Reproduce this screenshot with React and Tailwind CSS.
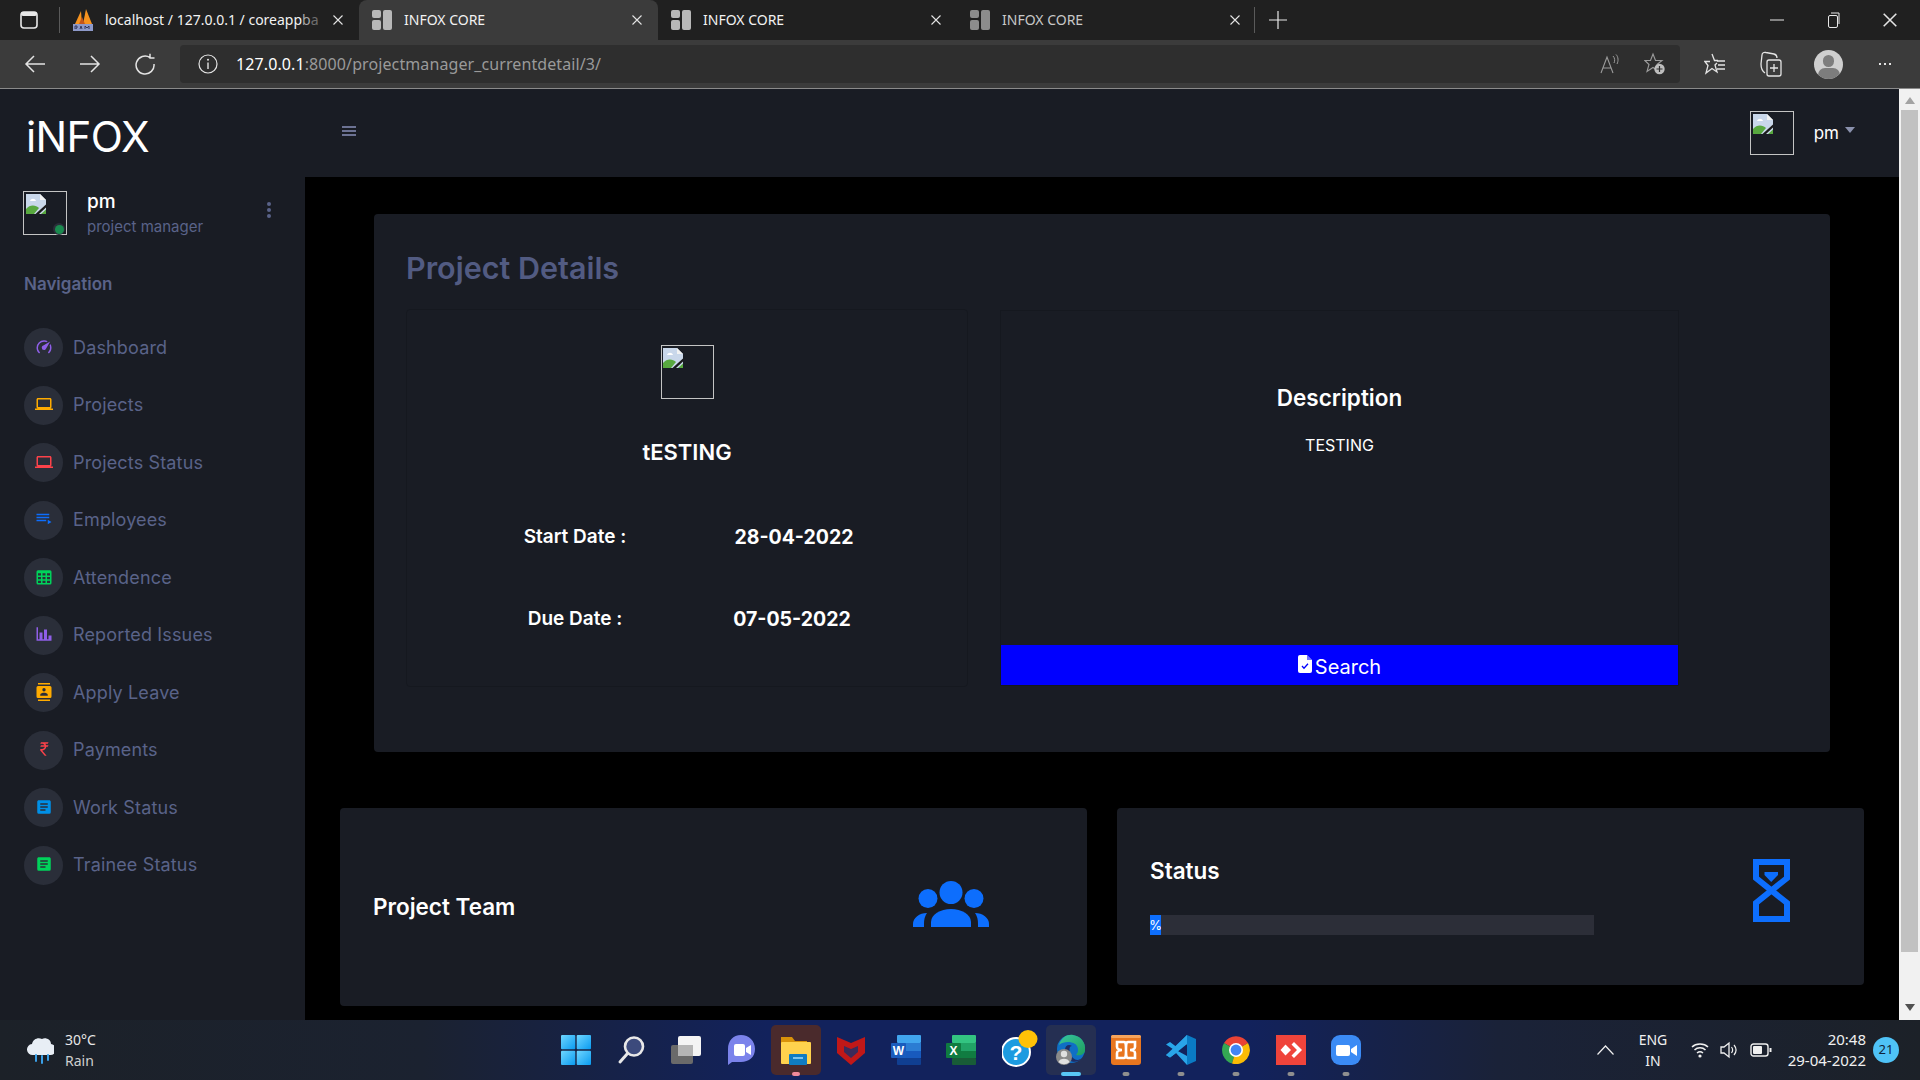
import React from "react";

const UI = "font-['Inter','Noto_Sans',sans-serif]";
const CHROME = "font-['Noto_Sans','Open_Sans',sans-serif]";

const P = {
  speed: "M12,16A3,3 0 0,1 9,13C9,11.88 9.61,10.9 10.5,10.39L20.21,4.77L14.68,14.35C14.18,15.33 13.17,16 12,16M12,3C13.81,3 15.5,3.5 16.97,4.32L14.87,5.53C14,5.19 13,5 12,5A8,8 0 0,0 4,13C4,15.21 4.89,17.21 6.34,18.65H6.35C6.74,19.04 6.74,19.67 6.35,20.06C5.96,20.45 5.32,20.45 4.93,20.07V20.07C3.12,18.26 2,15.76 2,13A10,10 0 0,1 12,3M22,13C22,15.76 20.88,18.26 19.07,20.07V20.07C18.68,20.45 18.05,20.45 17.66,20.06C17.27,19.67 17.27,19.04 17.66,18.65V18.65C19.11,17.2 20,15.21 20,13C20,12 19.81,11 19.46,10.1L20.67,8C21.5,9.5 22,11.18 22,13Z",
  laptop: "M4,6H20V16H4M20,18A2,2 0 0,0 22,16V6C22,4.89 21.1,4 20,4H4C2.89,4 2,4.89 2,6V16A2,2 0 0,0 4,18H0V20H24V18H20Z",
  list: "M19,9H2V11H19V9M19,5H2V7H19V5M2,15H15V13H2V15M17,13V19L22,16L17,13Z",
  table: "M4,3H20A2,2 0 0,1 22,5V20A2,2 0 0,1 20,22H4A2,2 0 0,1 2,20V5A2,2 0 0,1 4,3M4,7V10H8V7H4M10,7V10H14V7H10M20,10V7H16V10H20M4,12V15H8V12H4M4,20H8V17H4V20M10,12V15H14V12H10M10,20H14V17H10V20M20,20V17H16V20H20M20,12H16V15H20V12Z",
  chart: "M22,21H2V3H4V19H6V10H10V19H12V6H16V19H18V14H22V21Z",
  contacts: "M20,0H4V2H20V0M4,24H20V22H4V24M20,4H4A2,2 0 0,0 2,6V18A2,2 0 0,0 4,20H20A2,2 0 0,0 22,18V6A2,2 0 0,0 20,4M12,6.75A2.25,2.25 0 0,1 14.25,9A2.25,2.25 0 0,1 12,11.25A2.25,2.25 0 0,1 9.75,9A2.25,2.25 0 0,1 12,6.75M17,17H7V15.5C7,13.83 10.33,13 12,13C13.67,13 17,13.83 17,15.5V17Z",
  rupee: "M8,3H18L17,5H13.74C14.22,5.58 14.58,6.26 14.79,7H18L17,9H15C14.75,11.57 12.74,13.63 10.2,13.96V14H9.5L15.5,21H13L7,14V12H9.5V12C11.26,12 12.72,10.7 12.96,9H7L8,7H12.66C12.1,5.82 10.9,5 9.5,5H7L8,3Z",
  doc: "M14,17H7V15H14M17,13H7V11H17M17,9H7V7H17M19,3H5C3.89,3 3,3.89 3,5V19A2,2 0 0,0 5,21H19A2,2 0 0,0 21,19V5C21,3.89 20.1,3 19,3Z",
};

const NAV = [
  ["Dashboard", P.speed, "#8f5fe8"],
  ["Projects", P.laptop, "#ffab00"],
  ["Projects Status", P.laptop, "#fc424a"],
  ["Employees", P.list, "#0d6efd"],
  ["Attendence", P.table, "#00d25b"],
  ["Reported Issues", P.chart, "#8f5fe8"],
  ["Apply Leave", P.contacts, "#ffab00"],
  ["Payments", P.rupee, "#fc424a"],
  ["Work Status", P.doc, "#0090e7"],
  ["Trainee Status", P.doc, "#00d25b"],
];

function Broken({ size = 20 }) {
  return (
    <svg width={size} height={size} viewBox="0 0 20 20" className="block">
      <path d="M0 0H14L20 6V20H0Z" fill="#c9d7ea" />
      <path d="M14 0L20 6H14Z" fill="#f2f2f2" />
      <path d="M4 7c1-3 5-3 6 0z" fill="#fff" />
      <path d="M0 20V15C4 10 10 11 13 14L8 20Z" fill="#58a83f" />
      <path d="M9.5 20L20 10.5V13.5L13 20Z" fill="#1a1a1a" />
      <path d="M15 20L20 15.5V20Z" fill="#58a83f" />
    </svg>
  );
}

function ImgBox({ className, children, offset = "pl-[2px] pt-[2px]" }) {
  return (
    <div className={`relative box-border border border-[#c4c4c4] ${offset} ${className}`}>
      <Broken />
      {children}
    </div>
  );
}

function TabIcon({ dim }) {
  return (
    <svg width="20" height="20" viewBox="0 0 20 20" className="shrink-0">
      <g fill={dim ? "#8c8c8c" : "#b8b8b8"}>
        <rect x="0" y="0" width="9" height="8" rx="2" />
        <rect x="0" y="10" width="9" height="10" rx="2" />
        <rect x="11" y="0" width="9" height="20" rx="2" />
      </g>
    </svg>
  );
}

function Pma() {
  return (
    <svg width="20" height="22" viewBox="0 0 20 22" className="shrink-0">
      <path d="M2 15L8 2L9 15Z" fill="#f7931e" />
      <path d="M10 15L13 0L19 15Z" fill="#f7931e" />
      <path d="M6 15L9 8L12 15Z" fill="#c5561a" />
      <rect x="0" y="15" width="20" height="7" fill="#8d99c9" />
      <path d="M2 20V17H4V19H3V20M7 20L8 17L9 20M12 20V17L14 19L16 17V20" stroke="#2a2f55" strokeWidth="0.9" fill="none" />
    </svg>
  );
}

function CloseX({ size = 10, color = "#e4e4e4" }) {
  return (
    <svg width={size} height={size} viewBox="0 0 10 10" className="shrink-0">
      <path d="M0.5 0.5L9.5 9.5M9.5 0.5L0.5 9.5" stroke={color} strokeWidth="1.1" />
    </svg>
  );
}

function Tab({ active, title, icon, dim }) {
  return (
    <div className={`relative flex h-[40px] w-[299px] shrink-0 items-center pl-[13px] ${active ? "rounded-t-[8px] bg-[#3b3b3b]" : ""}`}>
      <div className="flex w-[20px] justify-center">{icon}</div>
      <div className={`ml-[12px] w-[218px] whitespace-nowrap text-[14px] leading-[20px] ${dim ? "text-[#c8c8c8]" : "text-[#f2f2f2]"}`}>
        {title}
      </div>
      <div className="ml-[10px]"><CloseX /></div>
    </div>
  );
}

function TabStrip() {
  return (
    <div className={`flex h-[40px] shrink-0 items-center bg-[#202020] ${CHROME}`}>
      <div className="flex w-[59px] shrink-0 justify-center pr-[2px]">
        <svg width="18" height="18" viewBox="0 0 18 18">
          <rect x="1" y="1" width="16" height="16" rx="3" fill="none" stroke="#e8e8e8" strokeWidth="1.6" />
          <rect x="1" y="1" width="16" height="4" rx="2" fill="#e8e8e8" />
        </svg>
      </div>
      <div className="h-[26px] w-px shrink-0 bg-[#5a5a5a]" />
      <Tab icon={<Pma />} title={<span>localhost / 127.0.0.1 / coreapp<span className="text-[#a8a8a8]">b</span><span className="text-[#6e6e6e]">a</span></span>} />
      <Tab active icon={<TabIcon />} title="INFOX CORE" />
      <Tab icon={<TabIcon />} title="INFOX CORE" />
      <Tab icon={<TabIcon dim />} title="INFOX CORE" dim />
      <div className="-ml-[2px] h-[26px] w-px shrink-0 bg-[#5a5a5a]" />
      <div className="ml-[14px]">
        <svg width="18" height="18" viewBox="0 0 18 18"><path d="M9 0V18M0 9H18" stroke="#e8e8e8" strokeWidth="1.2" /></svg>
      </div>
      <div className="ml-auto flex items-center">
        <div className="flex w-[57px] justify-center">
          <svg width="14" height="14" viewBox="0 0 14 14"><path d="M0 7H14" stroke="#e8e8e8" /></svg>
        </div>
        <div className="flex w-[57px] justify-center">
          <svg width="14" height="16" viewBox="0 0 14 16"><rect x="1.5" y="3.5" width="9" height="12" rx="1.5" fill="none" stroke="#e8e8e8" /><path d="M4 1H12V12" fill="none" stroke="#e8e8e8" /></svg>
        </div>
        <div className="flex w-[58px] justify-center pr-[2px]"><CloseX size={14} /></div>
      </div>
    </div>
  );
}

function Toolbar() {
  return (
    <div className={`flex h-[49px] shrink-0 items-start border-b border-[#8a8a8a] bg-[#3b3b3b] ${CHROME}`}>
      <div className="flex h-[48px] w-[180px] shrink-0 items-center pl-[24px]">
        <svg width="22" height="20" viewBox="0 0 22 20"><path d="M21 10H2M10 2L2 10L10 18" fill="none" stroke="#e4e4e4" strokeWidth="1.5" /></svg>
        <svg width="22" height="20" viewBox="0 0 22 20" className="ml-[33px]"><path d="M1 10H20M12 2L20 10L12 18" fill="none" stroke="#e4e4e4" strokeWidth="1.5" /></svg>
        <svg width="22" height="22" viewBox="0 0 22 22" className="ml-[33px]"><path d="M16 4.5A9 9 0 1 0 20 11M16 0.8V5H20.5" fill="none" stroke="#e4e4e4" strokeWidth="1.5" /></svg>
      </div>
      <div className="mt-[5px] flex h-[38px] w-[1500px] shrink-0 items-center rounded-[4px] bg-[#2e2e2e] pl-[18px]">
        <svg width="20" height="20" viewBox="0 0 20 20" className="shrink-0"><circle cx="10" cy="10" r="9" fill="none" stroke="#e4e4e4" strokeWidth="1.2" /><path d="M10 8.5V15" stroke="#e4e4e4" strokeWidth="1.4" /><circle cx="10" cy="5.8" r="1" fill="#e4e4e4" /></svg>
        <div className="ml-[18px] whitespace-nowrap text-[16px] leading-[22px] tracking-[0.1px] text-[#9a9a9a]">
          <span className="text-white">127.0.0.1</span>:8000/projectmanager_currentdetail/3/
        </div>
        <svg width="22" height="22" viewBox="0 0 22 22" className="ml-auto shrink-0"><path d="M2 20L8 4L14 20M4 15H12" fill="none" stroke="#9c9c9c" strokeWidth="1.1" /><path d="M14 3C16 5 16 8 15 10M17 1.5C19.5 4 19.5 8 18 11" fill="none" stroke="#9c9c9c" /></svg>
        <svg width="22" height="24" viewBox="0 0 22 24" className="ml-[23px] mr-[14px] shrink-0"><path d="M9 2L11.5 8.5H18L13 12.5L14 19L9 15.5L3 19.5L5 12.5L0.8 8.5H6.5Z" fill="none" stroke="#9c9c9c" strokeWidth="1.1" /><circle cx="15.5" cy="17" r="5.2" fill="#bdbdbd" /><path d="M15.5 14V20M12.5 17H18.5" stroke="#2e2e2e" strokeWidth="1.2" /></svg>
      </div>
      <div className="flex h-[48px] flex-1 items-center">
        <svg width="22" height="24" viewBox="0 0 22 24" className="ml-[24px]"><path d="M8 2L10.5 8.5H14M13 11L11 13L13 20L8 16.5L2 21L4 13.5L0.8 9.5H6" fill="none" stroke="#e4e4e4" strokeWidth="1.3" /><path d="M13 9H21M14 13H21M13 17H21" stroke="#e4e4e4" strokeWidth="1.3" /></svg>
        <svg width="24" height="26" viewBox="0 0 24 26" className="ml-[33px]"><path d="M6 22C3 20 2 17 2 13L3 4C3 2 5 1 7 1.5L15 3C17 3.5 18 5 18 7" fill="none" stroke="#e4e4e4" strokeWidth="1.3" /><rect x="8" y="9" width="14" height="16" rx="2" fill="#3b3b3b" stroke="#e4e4e4" strokeWidth="1.3" /><path d="M15 13V21M11 17H19" stroke="#e4e4e4" strokeWidth="1.3" /></svg>
        <div className="relative ml-[31px] h-[29px] w-[29px] overflow-hidden rounded-full bg-[#cfcfcf]">
          <div className="mx-auto mt-[5px] h-[12px] w-[11px] rounded-full bg-[#7d7d7d]" />
          <div className="mx-auto mt-[1px] h-[14px] w-[22px] rounded-full bg-[#7d7d7d]" />
        </div>
        <div className="ml-[36px] flex gap-[3px]">
          <div className="h-[2px] w-[2px] bg-[#e4e4e4]" /><div className="h-[2px] w-[2px] bg-[#e4e4e4]" /><div className="h-[2px] w-[2px] bg-[#e4e4e4]" />
        </div>
      </div>
    </div>
  );
}

function Sidebar() {
  return (
    <div className={`flex w-[305px] shrink-0 flex-col bg-[#191c24] pt-[23px] ${UI}`}>
      <div className="pl-[26px] text-[42px] font-normal leading-[50px] tracking-[-0.6px] text-white">iNFOX</div>
      <div className="ml-[23px] mt-[29px] flex h-[44px] items-start">
        <ImgBox className="h-[44px] w-[44px] shrink-0">
          <div className="absolute bottom-[-1px] right-[1px] flex h-[12px] w-[12px] items-center justify-center rounded-full bg-[#2a2e39]">
            <div className="h-[9px] w-[9px] rounded-full bg-[#1a8a4f]" />
          </div>
        </ImgBox>
        <div className="ml-[20px] w-[177px]">
          <div className="-mt-[1px] text-[19px] font-medium leading-[24px] text-white">pm</div>
          <div className="mt-[3px] text-[15px] leading-[20px] text-[#5a6389]">project manager</div>
        </div>
        <div className="mt-[11px] flex flex-col gap-[2px] pl-[3px]">
          <div className="h-[4px] w-[4px] rounded-full bg-[#5a6389]" />
          <div className="h-[4px] w-[4px] rounded-full bg-[#5a6389]" />
          <div className="h-[4px] w-[4px] rounded-full bg-[#5a6389]" />
        </div>
      </div>
      <div className="ml-[24px] mt-[37px] text-[17px] font-semibold leading-[24px] text-[#5a6389]">Navigation</div>
      <div className="ml-[24px] mt-[32px] flex flex-col gap-[18.5px]">
        {NAV.map(([label, path, color]) => (
          <div key={label} className="flex h-[39px] items-center">
            <div className="flex h-[39px] w-[39px] shrink-0 items-center justify-center rounded-full bg-[#2a2e39] pb-[2px]">
              <svg width="18" height="18" viewBox="0 0 24 24" fill={color}><path d={path} /></svg>
            </div>
            <div className="ml-[10px] whitespace-nowrap text-[18px] leading-[24px] tracking-[0.15px] text-[#5a6389]">{label}</div>
          </div>
        ))}
      </div>
    </div>
  );
}

function Header() {
  return (
    <div className={`flex h-[88px] shrink-0 items-center bg-[#191c24] ${UI}`}>
      <div className="mb-[4px] ml-[37px] flex flex-col gap-[2px]">
        <div className="h-[2px] w-[14px] bg-[#6c7293]" />
        <div className="h-[2px] w-[14px] bg-[#6c7293]" />
        <div className="h-[2px] w-[14px] bg-[#6c7293]" />
      </div>
      <div className="ml-auto flex items-center pr-[44px]">
        <ImgBox className="h-[44px] w-[44px]" />
        <div className="ml-[20px] text-[17px] leading-[24px] text-white">pm</div>
        <svg width="10" height="6" viewBox="0 0 10 6" className="mb-[6px] ml-[6px]"><path d="M0 0H10L5 6Z" fill="#8a91ad" /></svg>
      </div>
    </div>
  );
}

function DateRow({ label, value, w2 = 206, className = "" }) {
  return (
    <div className={`flex pl-[52px] text-white ${className}`}>
      <div className="w-[232px] text-center text-[19px] font-semibold leading-[24px]">{label}</div>
      <div className="text-center text-[19.5px] font-bold leading-[24px]" style={{ width: w2 }}>{value}</div>
    </div>
  );
}

function Details() {
  return (
    <div className={`ml-[69px] mr-[69px] mt-[37px] h-[538px] shrink-0 rounded-[4px] bg-[#191c24] px-[32px] ${UI}`}>
      <div className="pt-[36px] text-[30.5px] font-semibold leading-[36px] text-[#525b82]">Project Details</div>
      <div className="mt-[23px] flex items-start gap-[32px]">
        <div className="box-border flex h-[378px] w-[562px] shrink-0 flex-col rounded-[4px] border border-[#15181f] pt-[35px]">
          <div className="flex justify-center">
            <ImgBox className="h-[54px] w-[53px]" offset="pl-[1px] pt-[2px]" />
          </div>
          <div className="mt-[40px] text-center text-[22px] font-semibold leading-[26px] text-white">tESTING</div>
          <DateRow className="mt-[60px]" label="Start Date :" value="28-04-2022" />
          <DateRow className="mt-[58px]" label="Due Date :" value="07-05-2022" w2={202} />
        </div>
        <div className="mt-[1px] box-border flex h-[376px] w-[679px] shrink-0 flex-col border border-[#15181f] pt-[74px] text-center">
          <div className="text-[22.5px] font-semibold leading-[26px] text-white">Description</div>
          <div className="mt-[22px] text-[16px] leading-[24px] text-white">TESTING</div>
          <div className="mt-auto flex h-[40px] items-center justify-center bg-[#0000ff] pt-[3px] text-[20px] leading-[28px] text-white">
            <svg width="14" height="18" viewBox="0 0 14 18" className="mb-[6px]">
              <path d="M2 0H9L14 5V16A2 2 0 0 1 12 18H2A2 2 0 0 1 0 16V2A2 2 0 0 1 2 0Z" fill="#fff" />
              <path d="M9 0V5H14Z" fill="#0000ff" fillOpacity="0.55" />
              <path d="M4 11L6 13.2L10 8.8" fill="none" stroke="#0000ff" strokeWidth="1.3" />
            </svg>
            <span className="ml-[3px]">Search</span>
          </div>
        </div>
      </div>
    </div>
  );
}

function TeamIcon() {
  return (
    <svg width="76" height="46" viewBox="0 0 76 46" fill="#0d6efd" className="mb-[6px]">
      <ellipse cx="15" cy="17.5" rx="9.5" ry="9.5" />
      <ellipse cx="61" cy="17.5" rx="9.5" ry="9.5" />
      <circle cx="38" cy="11.5" r="14" fill="#191c24" />
      <circle cx="38" cy="11.5" r="11.5" />
      <path d="M18 46V41A20 13 0 0 1 58 41V46Z" />
      <path d="M0 46V43A14 11 0 0 1 14 32Q11 36 11 43V46Z" />
      <path d="M76 46V43A14 11 0 0 0 62 32Q65 36 65 43V46Z" />
    </svg>
  );
}

function Hourglass() {
  return (
    <svg width="37" height="63" viewBox="0 0 37 63" fill="none">
      <path d="M3 3H34V19L3 44V60H34V44L3 19Z" stroke="#0d6efd" strokeWidth="6" />
      <path d="M11.5 13H25V16L18.2 23L11.5 16Z" fill="#0d6efd" />
    </svg>
  );
}

function BottomCards() {
  return (
    <div className={`mt-[56px] flex items-start gap-[30px] pl-[35px] pr-[35px] ${UI}`}>
      <div className="flex h-[198px] w-[747px] shrink-0 items-center justify-between rounded-[4px] bg-[#191c24] pl-[33px] pr-[98px]">
        <div className="text-[22.5px] font-semibold leading-[26px] text-white">Project Team</div>
        <TeamIcon />
      </div>
      <div className="flex h-[177px] w-[747px] shrink-0 items-start justify-between rounded-[4px] bg-[#191c24] pl-[33px] pr-[74px]">
        <div className="w-[444px] pt-[50px]">
          <div className="text-[22.5px] font-semibold leading-[26px] text-white">Status</div>
          <div className="mt-[31px] h-[20px] bg-[#2c2e38]">
            <div className="flex h-[20px] w-[11px] items-center justify-center bg-[#0d6efd] text-[13px] leading-[20px] text-white">%</div>
          </div>
        </div>
        <div className="pt-[51px]"><Hourglass /></div>
      </div>
    </div>
  );
}

function Scrollbar() {
  return (
    <div className="flex w-[21px] shrink-0 flex-col items-center bg-[#f1f1f1]">
      <svg width="10" height="7" viewBox="0 0 10 7" className="mt-[8px]"><path d="M5 0L10 7H0Z" fill="#a3a3a3" /></svg>
      <div className="mt-[6px] h-[842px] w-[17px] bg-[#c1c1c1]" />
      <svg width="10" height="7" viewBox="0 0 10 7" className="mt-[52px]"><path d="M5 7L10 0H0Z" fill="#505050" /></svg>
    </div>
  );
}

/* Taskbar icons */
const Tk = {
  win: (
    <svg width="30" height="30" viewBox="0 0 30 30">
      <defs><linearGradient id="wg" x1="0" y1="0" x2="1" y2="1"><stop offset="0" stopColor="#6fd6ff" /><stop offset="1" stopColor="#0a9bf0" /></linearGradient></defs>
      <g fill="url(#wg)"><rect width="14.3" height="14.3" rx="1" /><rect x="15.7" width="14.3" height="14.3" rx="1" /><rect y="15.7" width="14.3" height="14.3" rx="1" /><rect x="15.7" y="15.7" width="14.3" height="14.3" rx="1" /></g>
    </svg>
  ),
  search: (
    <svg width="30" height="30" viewBox="0 0 30 30">
      <circle cx="18" cy="11.5" r="9" fill="#3c4a7c" stroke="#e8e8e8" strokeWidth="2.6" />
      <path d="M11.5 18.5L4 27" stroke="#e8e8e8" strokeWidth="3" strokeLinecap="round" />
    </svg>
  ),
  task: (
    <svg width="30" height="28" viewBox="0 0 30 28">
      <rect x="0" y="9" width="22" height="19" rx="2" fill="#6a6a6a" />
      <rect x="7" y="0" width="23" height="20" rx="2" fill="#f4f4f4" />
      <rect x="7" y="9" width="15" height="11" fill="#b5b5b5" />
    </svg>
  ),
  chat: (
    <svg width="28" height="30" viewBox="0 0 28 30">
      <path d="M14 0C22 0 28 6 28 14C28 22 22 27 14 27H5L1 30V14C1 6 6 0 14 0Z" fill="#7b83eb" />
      <rect x="7" y="9" width="11" height="12" rx="2" fill="#fff" />
      <path d="M19 13L24 10V20L19 17Z" fill="#fff" />
    </svg>
  ),
  folder: (
    <svg width="30" height="30" viewBox="0 0 30 30">
      <path d="M0 2H11L14 6H26V10H0Z" fill="#d9920a" />
      <rect x="0" y="7" width="30" height="22" rx="1" fill="#ffd24d" />
      <rect x="8" y="19" width="18" height="11" rx="1" fill="#0f7cc2" />
      <rect x="12" y="22" width="10" height="2" fill="#7ac4ee" />
    </svg>
  ),
  mcafee: (
    <svg width="28" height="30" viewBox="0 0 28 30">
      <path d="M0 2L14 8L28 2V18L14 30L0 18Z" fill="#c01818" />
      <path d="M7 11L14 14L21 11V17L14 23L7 17Z" fill="#3a2b5a" />
    </svg>
  ),
  word: (
    <svg width="30" height="30" viewBox="0 0 30 30">
      <rect x="6" y="0" width="24" height="8" rx="1" fill="#41a5ee" />
      <rect x="6" y="8" width="24" height="8" fill="#2b7cd3" />
      <rect x="6" y="16" width="24" height="7" fill="#185abd" />
      <rect x="6" y="23" width="24" height="7" rx="1" fill="#103f91" />
      <rect x="0" y="8" width="15" height="15" rx="1" fill="#1a5cbd" />
      <text x="7.5" y="20" textAnchor="middle" fontSize="12" fontWeight="700" fill="#fff" fontFamily="Liberation Sans">W</text>
    </svg>
  ),
  excel: (
    <svg width="30" height="30" viewBox="0 0 30 30">
      <rect x="6" y="0" width="24" height="8" rx="1" fill="#33c481" />
      <rect x="6" y="8" width="24" height="8" fill="#21a366" />
      <rect x="6" y="16" width="24" height="7" fill="#107c41" />
      <rect x="6" y="23" width="24" height="7" rx="1" fill="#185c37" />
      <rect x="0" y="8" width="15" height="15" rx="1" fill="#0f7b40" />
      <text x="7.5" y="20" textAnchor="middle" fontSize="12" fontWeight="700" fill="#fff" fontFamily="Liberation Sans">X</text>
    </svg>
  ),
  help: (
    <svg width="36" height="40" viewBox="0 0 36 40" className="ml-[8px]">
      <circle cx="14" cy="22" r="14" fill="#1c9be0" stroke="#ffffff" strokeWidth="2" />
      <text x="14" y="30" textAnchor="middle" fontSize="21" fontWeight="700" fill="#fff" fontFamily="Liberation Sans">?</text>
      <ellipse cx="26" cy="9" rx="9.5" ry="9" fill="#ffc107" />
    </svg>
  ),
  edge: (
    <svg width="30" height="32" viewBox="0 0 30 32">
      <defs><linearGradient id="eg" x1="0" y1="0" x2="1" y2="1"><stop offset="0" stopColor="#36c4a0" /><stop offset="1" stopColor="#1f9f5c" /></linearGradient></defs>
      <circle cx="15" cy="15" r="14" fill="#0f6fc5" />
      <path d="M3 11C5 3 12 0 17 1C25 2 30 9 29 16C29 20 25 22 20 21C22 19 23 16 21 12C19 8 9 6 3 11Z" fill="url(#eg)" />
      <path d="M9 16C9 11 13 10 16 12C12 12 13 20 17 24C20 27 24 26 26 24C22 30 10 30 9 16Z" fill="#1d2d66" />
      <circle cx="8" cy="23" r="8" fill="#8a8a8a" />
      <circle cx="8" cy="20" r="3.2" fill="#e0e0e0" />
      <path d="M2.5 28C3.5 23.5 12.5 23.5 13.5 28C10 31 6 31 2.5 28Z" fill="#e0e0e0" />
    </svg>
  ),
  xampp: (
    <svg width="30" height="30" viewBox="0 0 30 30">
      <rect width="30" height="30" rx="3" fill="#e8761f" />
      <rect x="0" y="0" width="30" height="3" rx="1.5" fill="#f6a45c" />
      <path d="M6 7H13C15 7 15 10 15 15C15 10 15 7 17 7H24V12C24 14 21 15 19 15C21 15 24 16 24 18V23H17C15 23 15 20 15 15C15 20 15 23 13 23H6V18C6 16 9 15 11 15C9 15 6 14 6 12Z" fill="none" stroke="#fff" strokeWidth="2.6" />
    </svg>
  ),
  vscode: (
    <svg width="30" height="30" viewBox="0 0 30 30">
      <path d="M21 0L30 4V26L21 30V0Z" fill="#0a7bc4" />
      <path d="M21 0V9L10 18L4 22.5L0 20L8 14.8L0 9.5L4 7L10 11.5Z" fill="#28a7ea" />
      <path d="M21 21V30L10 18L4 22.5L0 20L21 0V9L10 15Z" fill="#2aa5e8" />
    </svg>
  ),
  chrome: (
    <svg width="30" height="30" viewBox="0 0 30 30">
      <path d="M15 15L3 8A14 14 0 0 1 27 8Z" fill="#ea4335" />
      <path d="M15 15L3 8A14 14 0 0 0 11 28.5Z" fill="#34a853" />
      <path d="M15 15L27 8A14 14 0 0 1 11 28.5Z" fill="#fbbc05" />
      <circle cx="15" cy="15" r="7" fill="#fff" />
      <circle cx="15" cy="15" r="5.4" fill="#4285f4" />
    </svg>
  ),
  anydesk: (
    <svg width="30" height="30" viewBox="0 0 30 30">
      <rect width="30" height="30" fill="#ef443b" />
      <path d="M9.5 9.5L15 15L9.5 20.5L4.5 15Z" fill="#fff" />
      <path d="M18 7L26 15L18 23L15.5 20.5L21 15L15.5 9.5Z" fill="#fff" />
    </svg>
  ),
  zoom: (
    <svg width="30" height="30" viewBox="0 0 30 30">
      <rect width="30" height="30" rx="9" fill="#3b8bf5" />
      <rect x="5" y="10" width="14" height="11" rx="2" fill="#fff" />
      <path d="M20 14L26 10V21L20 17Z" fill="#fff" />
    </svg>
  ),
};

function Slot({ children, bg, dot }) {
  return (
    <div className="relative flex h-[60px] w-[55px] shrink-0 items-center justify-center">
      {bg && <div className={`absolute left-[2.5px] top-[5px] h-[50px] w-[50px] rounded-[5px] ${bg}`} />}
      <div className="relative">{children}</div>
      {dot && <div className={`absolute bottom-[4px] left-1/2 h-[4px] -translate-x-1/2 rounded-full ${dot}`} />}
    </div>
  );
}

function Taskbar() {
  return (
    <div className={`flex h-[60px] shrink-0 items-center bg-[linear-gradient(90deg,#1c2128_0%,#1b2230_22%,#12225c_40%,#12225c_65%,#1a2238_78%,#1c2128_100%)] ${CHROME}`}>
      <div className="flex w-[548px] shrink-0 items-center pl-[27px]">
        <svg width="27" height="28" viewBox="0 0 27 28">
          <path d="M6 19A5.5 5.5 0 0 1 5 8C6 3 11 1 15 3C18 1 24 3 24 8A5.5 5.5 0 0 1 23 19Z" fill="#e8eef5" />
          <path d="M9 19V25M15 20V27M21 19V24" stroke="#3aa0e8" strokeWidth="2" strokeLinecap="round" />
        </svg>
        <div className="ml-[11px] text-[14px] leading-[21px] text-[#e8e8e8]">
          <div>30°C</div>
          <div className="text-[#cfcfcf]">Rain</div>
        </div>
      </div>
      <Slot>{Tk.win}</Slot>
      <Slot>{Tk.search}</Slot>
      <Slot>{Tk.task}</Slot>
      <Slot>{Tk.chat}</Slot>
      <Slot bg="bg-[#4a2a2c]" dot="w-[8px] bg-[#f08a9a]">{Tk.folder}</Slot>
      <Slot>{Tk.mcafee}</Slot>
      <Slot>{Tk.word}</Slot>
      <Slot>{Tk.excel}</Slot>
      <Slot>{Tk.help}</Slot>
      <Slot bg="bg-[#252f52]" dot="w-[20px] bg-[#58c6f5]">{Tk.edge}</Slot>
      <Slot dot="w-[7px] bg-[#8f8f8f]">{Tk.xampp}</Slot>
      <Slot dot="w-[7px] bg-[#8f8f8f]">{Tk.vscode}</Slot>
      <Slot dot="w-[7px] bg-[#8f8f8f]">{Tk.chrome}</Slot>
      <Slot dot="w-[7px] bg-[#8f8f8f]">{Tk.anydesk}</Slot>
      <Slot dot="w-[7px] bg-[#8f8f8f]">{Tk.zoom}</Slot>
      <div className="flex flex-1 items-center text-[#f0f0f0]">
        <svg width="17" height="10" viewBox="0 0 17 10" className="ml-[224px]"><path d="M0.5 9.5L8.5 1L16.5 9.5" fill="none" stroke="#f0f0f0" strokeWidth="1.2" /></svg>
        <div className="ml-[16px] w-[46px] text-center text-[14px] leading-[21px]">
          <div>ENG</div>
          <div>IN</div>
        </div>
        <svg width="18" height="16" viewBox="0 0 18 16" className="ml-[15px]"><path d="M1 5C5 1 13 1 17 5M3.5 8C6.5 5 11.5 5 14.5 8M6 11C7.8 9.5 10.2 9.5 12 11" fill="none" stroke="#f0f0f0" strokeWidth="1.5" /><circle cx="9" cy="14" r="1.6" fill="#f0f0f0" /></svg>
        <svg width="18" height="18" viewBox="0 0 18 18" className="ml-[11px]"><path d="M1 6H4L9 2V16L4 12H1Z" fill="none" stroke="#f0f0f0" strokeWidth="1.3" /><path d="M11.5 6C13 8 13 10 11.5 12M14 4C16.5 7 16.5 11 14 14" fill="none" stroke="#f0f0f0" strokeWidth="1.2" /></svg>
        <svg width="22" height="14" viewBox="0 0 22 14" className="ml-[12px]"><rect x="1" y="1" width="17" height="12" rx="2.5" fill="none" stroke="#f0f0f0" strokeWidth="1.4" /><rect x="3" y="3" width="9" height="8" rx="1" fill="#f0f0f0" /><rect x="19.5" y="5" width="2" height="4" fill="#f0f0f0" /></svg>
        <div className="ml-auto text-right text-[15px] leading-[21px]">
          <div>20:48</div>
          <div className="whitespace-nowrap">29-04-2022</div>
        </div>
        <div className="ml-[7px] mr-[21px] flex h-[26px] w-[26px] shrink-0 items-center justify-center rounded-full bg-[#4fc3f7] text-[13px] text-[#10233a]">21</div>
      </div>
    </div>
  );
}

export default function App() {
  return (
    <div className="flex h-[1080px] w-[1920px] flex-col overflow-hidden bg-black">
      <TabStrip />
      <Toolbar />
      <div className="flex min-h-0 flex-1">
        <Sidebar />
        <div className="flex min-w-0 flex-1 flex-col bg-black">
          <Header />
          <Details />
          <BottomCards />
        </div>
        <Scrollbar />
      </div>
      <Taskbar />
    </div>
  );
}
